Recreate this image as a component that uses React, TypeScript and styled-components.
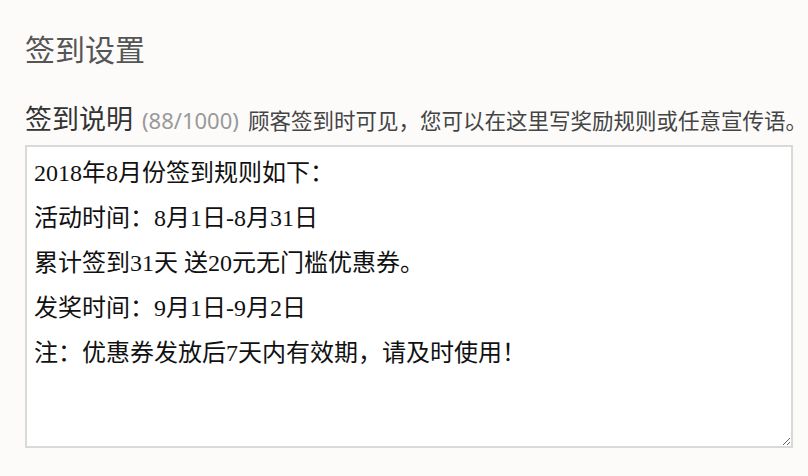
import styled, { createGlobalStyle } from "styled-components";

const GlobalStyle = createGlobalStyle`
  html, body {
    margin: 0;
    padding: 0;
    background: #fcfbfa;
    font-family: "Noto Sans", "Noto Sans CJK SC", sans-serif;
  }
`;

const RULES = `2018年8月份签到规则如下：
活动时间：8月1日-8月31日
累计签到31天 送20元无门槛优惠券。
发奖时间：9月1日-9月2日
注：优惠券发放后7天内有效期，请及时使用！`;

function App() {
  return (
    <>
      <GlobalStyle />
      <Page>
        <Title>签到设置</Title>
        <Field>
          <LabelRow>
            <Label>签到说明</Label>
            <Count>(88/1000)</Count>
            <Hint>顾客签到时可见，您可以在这里写奖励规则或任意宣传语。</Hint>
          </LabelRow>
          <Rules defaultValue={RULES} maxLength={1000} />
        </Field>
      </Page>
    </>
  );
}

export default App;

const Page = styled.main`
  padding: 28px 0 0 25px;
  width: 768px;
`;

const Title = styled.h2`
  margin: 0;
  font-size: 30px;
  line-height: 40px;
  font-weight: 400;
  color: #555;
  font-family: "Noto Sans CJK SC", sans-serif;
`;

const Field = styled.section`
  margin-top: 33px;
  display: flex;
  flex-direction: column;
  gap: 8px;
`;

const LabelRow = styled.div`
  display: flex;
  align-items: baseline;
  gap: 9px;
  white-space: nowrap;
  line-height: 34px;
`;

const Label = styled.span`
  font-size: 27px;
  color: #333;
  font-family: "Noto Sans CJK SC", sans-serif;
`;

const Count = styled.span`
  font-size: 22px;
  color: #999;
`;

const Hint = styled.span`
  font-size: 21.5px;
  color: #444;
  font-family: "Noto Sans CJK SC", sans-serif;
`;

const Rules = styled.textarea`
  box-sizing: border-box;
  width: 768px;
  height: 303px;
  margin: 0;
  padding: 4px 7px 2px;
  border: 2px solid #d9d9d9;
  background: #fff;
  color: #111;
  font-family: "Liberation Serif", "Noto Sans CJK SC", serif;
  font-size: 24px;
  line-height: 45px;
  outline: none;
`;
